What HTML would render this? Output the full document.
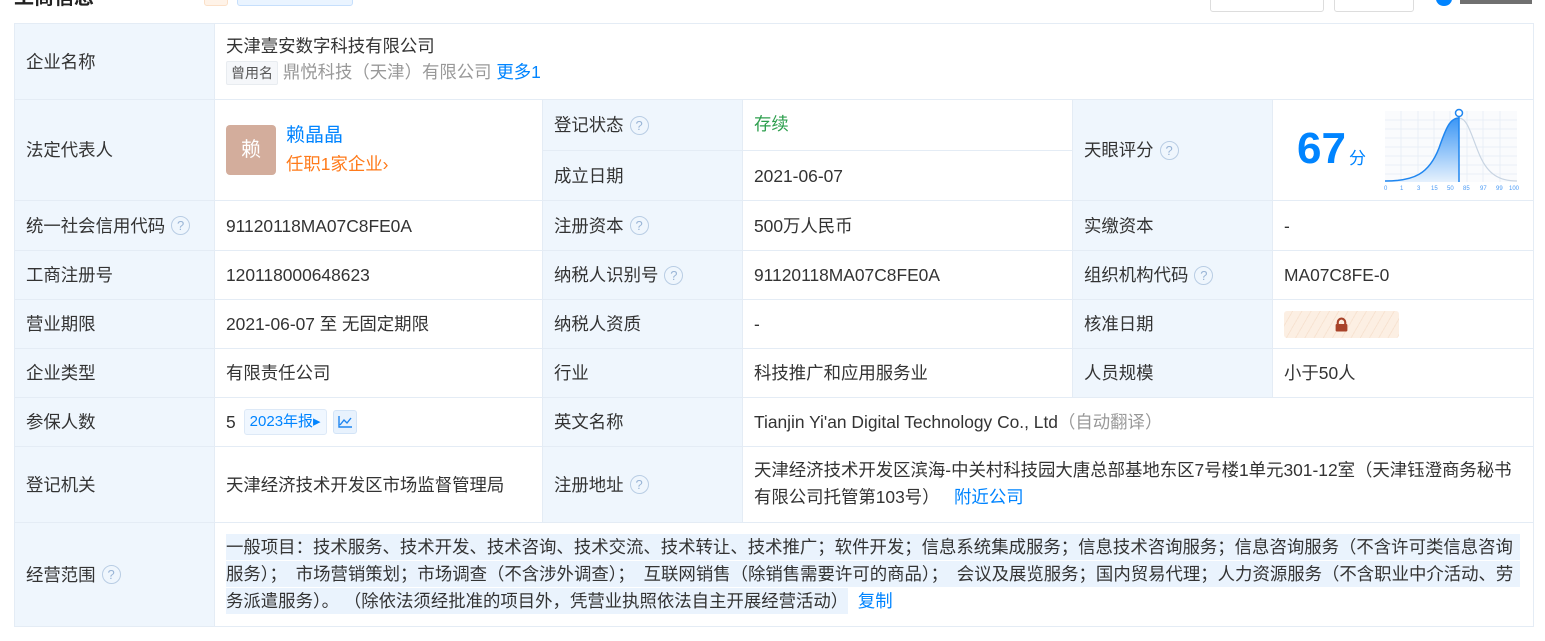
<!DOCTYPE html>
<html><head><meta charset="utf-8"><style>
*{margin:0;padding:0;box-sizing:border-box}
body{width:1545px;height:641px;background:#fff;font-family:"Liberation Sans","Noto Sans CJK SC",sans-serif;font-size:17.4px;color:#333;position:relative;overflow:hidden}
.c{position:absolute;border-right:1px solid #e4ecf5;border-bottom:1px solid #e4ecf5;display:flex;align-items:center;padding-left:11px;line-height:24px;white-space:nowrap}
.l{background:#eff6fd}
.q{display:inline-block;width:19px;height:19px;border:1px solid #b9cde4;border-radius:50%;color:#9ab5d6;font-size:13px;line-height:17px;text-align:center;margin-left:6px}
.a{position:absolute}
.hl{background:#eaf3fd;display:inline-block;line-height:26px}
</style></head><body>
<div class="a" style="left:14px;top:-19px;font-size:20px;font-weight:bold;color:#222">工商信息</div>
<div class="a" style="left:204px;top:-10px;width:24px;height:16px;background:#fff3e8;border:1px solid #fbe0c8;border-radius:3px"></div>
<div class="a" style="left:237px;top:-10px;width:116px;height:16px;background:#eaf4ff;border:1px solid #c6dffc;border-radius:3px"></div>
<div class="a" style="left:1210px;top:-10px;width:114px;height:22px;border:1px solid #ddd;border-radius:3px"></div>
<div class="a" style="left:1334px;top:-10px;width:80px;height:22px;border:1px solid #ddd;border-radius:3px"></div>
<div class="a" style="left:1436px;top:-8px;width:16px;height:14px;background:#0084ff;border-radius:50%"></div>
<div class="a" style="left:1460px;top:-6px;width:72px;height:10px;background:#333;opacity:.7"></div>
<div class="a" style="left:14px;top:23px;width:1520px;height:604px;border-left:1px solid #e4ecf5;border-top:1px solid #e4ecf5"></div>

<div class="c l" style="left:15px;top:24px;width:200px;height:76px">企业名称</div>
<div class="c" style="left:215px;top:24px;width:1319px;height:76px;display:block;padding-top:10px">
<div>天津壹安数字科技有限公司</div>
<div style="margin-top:2px;color:#999"><span style="display:inline-block;background:#f5f7fa;border:1px solid #e8ecf0;border-radius:2px;font-size:14px;color:#555;padding:0 4px;line-height:22px">曾用名</span> 鼎悦科技（天津）有限公司 <span style="color:#0084ff">更多1</span></div></div>

<div class="c l" style="left:15px;top:100px;width:200px;height:101px">法定代表人</div>
<div class="c" style="left:215px;top:100px;width:328px;height:101px">
<div style="width:50px;height:50px;background:#d3ad9c;border-radius:4px;color:#fff;font-size:20px;display:flex;align-items:center;justify-content:center">赖</div>
<div style="margin-left:10px;line-height:29px"><div style="color:#0084ff;font-size:19px">赖晶晶</div><div style="color:#ff7a1a">任职1家企业›</div></div></div>
<div class="c l" style="left:543px;top:100px;width:200px;height:51px">登记状态<span class="q">?</span></div>
<div class="c" style="left:743px;top:100px;width:330px;height:51px;color:#2e9f4e;align-items:flex-start;padding-top:12px">存续</div>
<div class="c l" style="left:543px;top:151px;width:200px;height:50px">成立日期</div>
<div class="c" style="left:743px;top:151px;width:330px;height:50px">2021-06-07</div>
<div class="c l" style="left:1073px;top:100px;width:200px;height:101px">天眼评分<span class="q">?</span></div>
<div class="c" style="left:1273px;top:100px;width:261px;height:101px">
<span class="a" style="left:24px;top:24px;font-size:44px;font-weight:bold;color:#0084ff;line-height:50px">67</span>
<span class="a" style="left:76px;top:47px;font-size:17px;color:#0084ff">分</span>
<svg class="a" style="left:111px;top:8px" width="136" height="86" viewBox="0 0 136 86">
<defs><linearGradient id="g" x1="0" y1="0" x2="0" y2="1"><stop offset="0" stop-color="#3b96f5"/><stop offset="1" stop-color="#e6f1fd"/></linearGradient></defs>
<rect x="1" y="3" width="132" height="71" fill="#fafbfd"/>
<g stroke="#e9eff6" stroke-width="1"><path d="M17 3V74M34 3V74M50 3V74M66 3V74M83 3V74M99 3V74M116 3V74M1 12H133M1 21H133M1 30H133M1 39H133M1 48H133M1 57H133M1 66H133"/></g>
<path d="M1 73C30 73 45 66 55 40C62 20 66 10 75 10L75 74L1 74Z" fill="url(#g)"/>
<path d="M1 73C30 73 45 66 55 40C62 20 66 10 75 10" fill="none" stroke="#1f86f0" stroke-width="1.5"/>
<path d="M75 10C84 10 88 30 96 48C104 66 115 73 133 73" fill="none" stroke="#c8d4e2" stroke-width="1.2"/>
<line x1="75" y1="7" x2="75" y2="74" stroke="#1f86f0" stroke-width="1.5"/>
<circle cx="75" cy="5" r="3.5" fill="#fff" stroke="#1f86f0" stroke-width="1.5"/>
<g fill="#4a9af5" font-size="6" font-family="Liberation Sans"><text x="0" y="82">0</text><text x="16" y="82">1</text><text x="33" y="82">3</text><text x="47" y="82">15</text><text x="63" y="82">50</text><text x="79" y="82">85</text><text x="96" y="82">97</text><text x="112" y="82">99</text><text x="125" y="82">100</text></g>
</svg></div>

<div class="c l" style="left:15px;top:201px;width:200px;height:50px">统一社会信用代码<span class="q">?</span></div>
<div class="c" style="left:215px;top:201px;width:328px;height:50px">91120118MA07C8FE0A</div>
<div class="c l" style="left:543px;top:201px;width:200px;height:50px">注册资本<span class="q">?</span></div>
<div class="c" style="left:743px;top:201px;width:330px;height:50px">500万人民币</div>
<div class="c l" style="left:1073px;top:201px;width:200px;height:50px">实缴资本</div>
<div class="c" style="left:1273px;top:201px;width:261px;height:50px">-</div>

<div class="c l" style="left:15px;top:251px;width:200px;height:49px">工商注册号</div>
<div class="c" style="left:215px;top:251px;width:328px;height:49px">120118000648623</div>
<div class="c l" style="left:543px;top:251px;width:200px;height:49px">纳税人识别号<span class="q">?</span></div>
<div class="c" style="left:743px;top:251px;width:330px;height:49px">91120118MA07C8FE0A</div>
<div class="c l" style="left:1073px;top:251px;width:200px;height:49px">组织机构代码<span class="q">?</span></div>
<div class="c" style="left:1273px;top:251px;width:261px;height:49px">MA07C8FE-0</div>

<div class="c l" style="left:15px;top:300px;width:200px;height:49px">营业期限</div>
<div class="c" style="left:215px;top:300px;width:328px;height:49px">2021-06-07 至 无固定期限</div>
<div class="c l" style="left:543px;top:300px;width:200px;height:49px">纳税人资质</div>
<div class="c" style="left:743px;top:300px;width:330px;height:49px">-</div>
<div class="c l" style="left:1073px;top:300px;width:200px;height:49px">核准日期</div>
<div class="c" style="left:1273px;top:300px;width:261px;height:49px"><div style="width:115px;height:27px;border-radius:3px;background:repeating-linear-gradient(120deg,#fcefe3 0 7px,#f7e3d2 7px 8px);display:flex;align-items:center;justify-content:center"><svg width="15" height="15" viewBox="0 0 14 14"><path d="M3.5 7V5a3.5 3.5 0 0 1 7 0v2" fill="none" stroke="#a8432a" stroke-width="2"/><rect x="1.5" y="6.5" width="11" height="7" rx="1" fill="#a8432a"/></svg></div></div>

<div class="c l" style="left:15px;top:349px;width:200px;height:49px">企业类型</div>
<div class="c" style="left:215px;top:349px;width:328px;height:49px">有限责任公司</div>
<div class="c l" style="left:543px;top:349px;width:200px;height:49px">行业</div>
<div class="c" style="left:743px;top:349px;width:330px;height:49px">科技推广和应用服务业</div>
<div class="c l" style="left:1073px;top:349px;width:200px;height:49px">人员规模</div>
<div class="c" style="left:1273px;top:349px;width:261px;height:49px">小于50人</div>

<div class="c l" style="left:15px;top:398px;width:200px;height:49px">参保人数</div>
<div class="c" style="left:215px;top:398px;width:328px;height:49px">5<span style="margin-left:8px;background:#f0f7ff;border:1px solid #dde9f7;border-radius:3px;color:#0084ff;font-size:15px;padding:0 5px;line-height:24px">2023年报▸</span><span style="margin-left:6px;width:24px;height:24px;background:#e8f2fd;border:1px solid #d3e4f7;border-radius:3px;display:inline-flex;align-items:center;justify-content:center"><svg width="14" height="12" viewBox="0 0 14 12"><path d="M1 0V11H14M2 9L6 4L9 7L13 2" fill="none" stroke="#1f86f0" stroke-width="1.4"/></svg></span></div>
<div class="c l" style="left:543px;top:398px;width:200px;height:49px">英文名称</div>
<div class="c" style="left:743px;top:398px;width:791px;height:49px">Tianjin Yi'an Digital Technology Co., Ltd<span style="color:#999">（自动翻译）</span></div>

<div class="c l" style="left:15px;top:447px;width:200px;height:76px">登记机关</div>
<div class="c" style="left:215px;top:447px;width:328px;height:76px">天津经济技术开发区市场监督管理局</div>
<div class="c l" style="left:543px;top:447px;width:200px;height:76px">注册地址<span class="q">?</span></div>
<div class="c" style="left:743px;top:447px;width:791px;height:76px;line-height:27px;display:block;padding-top:10px">天津经济技术开发区滨海-中关村科技园大唐总部基地东区7号楼1单元301-12室（天津钰澄商务秘书<br>有限公司托管第103号）&nbsp;&nbsp;&nbsp;<span style="color:#0084ff">附近公司</span></div>

<div class="c l" style="left:15px;top:523px;width:200px;height:104px">经营范围<span class="q">?</span></div>
<div class="c" style="left:215px;top:523px;width:1319px;height:104px;display:block;padding-top:11px"><div style="line-height:27px">
<span class="hl" style="width:1294px">一般项目：技术服务、技术开发、技术咨询、技术交流、技术转让、技术推广；软件开发；信息系统集成服务；信息技术咨询服务；信息咨询服务（不含许可类信息咨询</span><br>
<span class="hl" style="width:1294px;word-spacing:4px">服务）；&nbsp;市场营销策划；市场调查（不含涉外调查）；&nbsp;互联网销售（除销售需要许可的商品）；&nbsp;会议及展览服务；国内贸易代理；人力资源服务（不含职业中介活动、劳</span><br>
<span class="hl">务派遣服务）。&nbsp;（除依法须经批准的项目外，凭营业执照依法自主开展经营活动）</span>&nbsp;&nbsp;<span style="color:#0084ff">复制</span></div></div>
</body></html>
